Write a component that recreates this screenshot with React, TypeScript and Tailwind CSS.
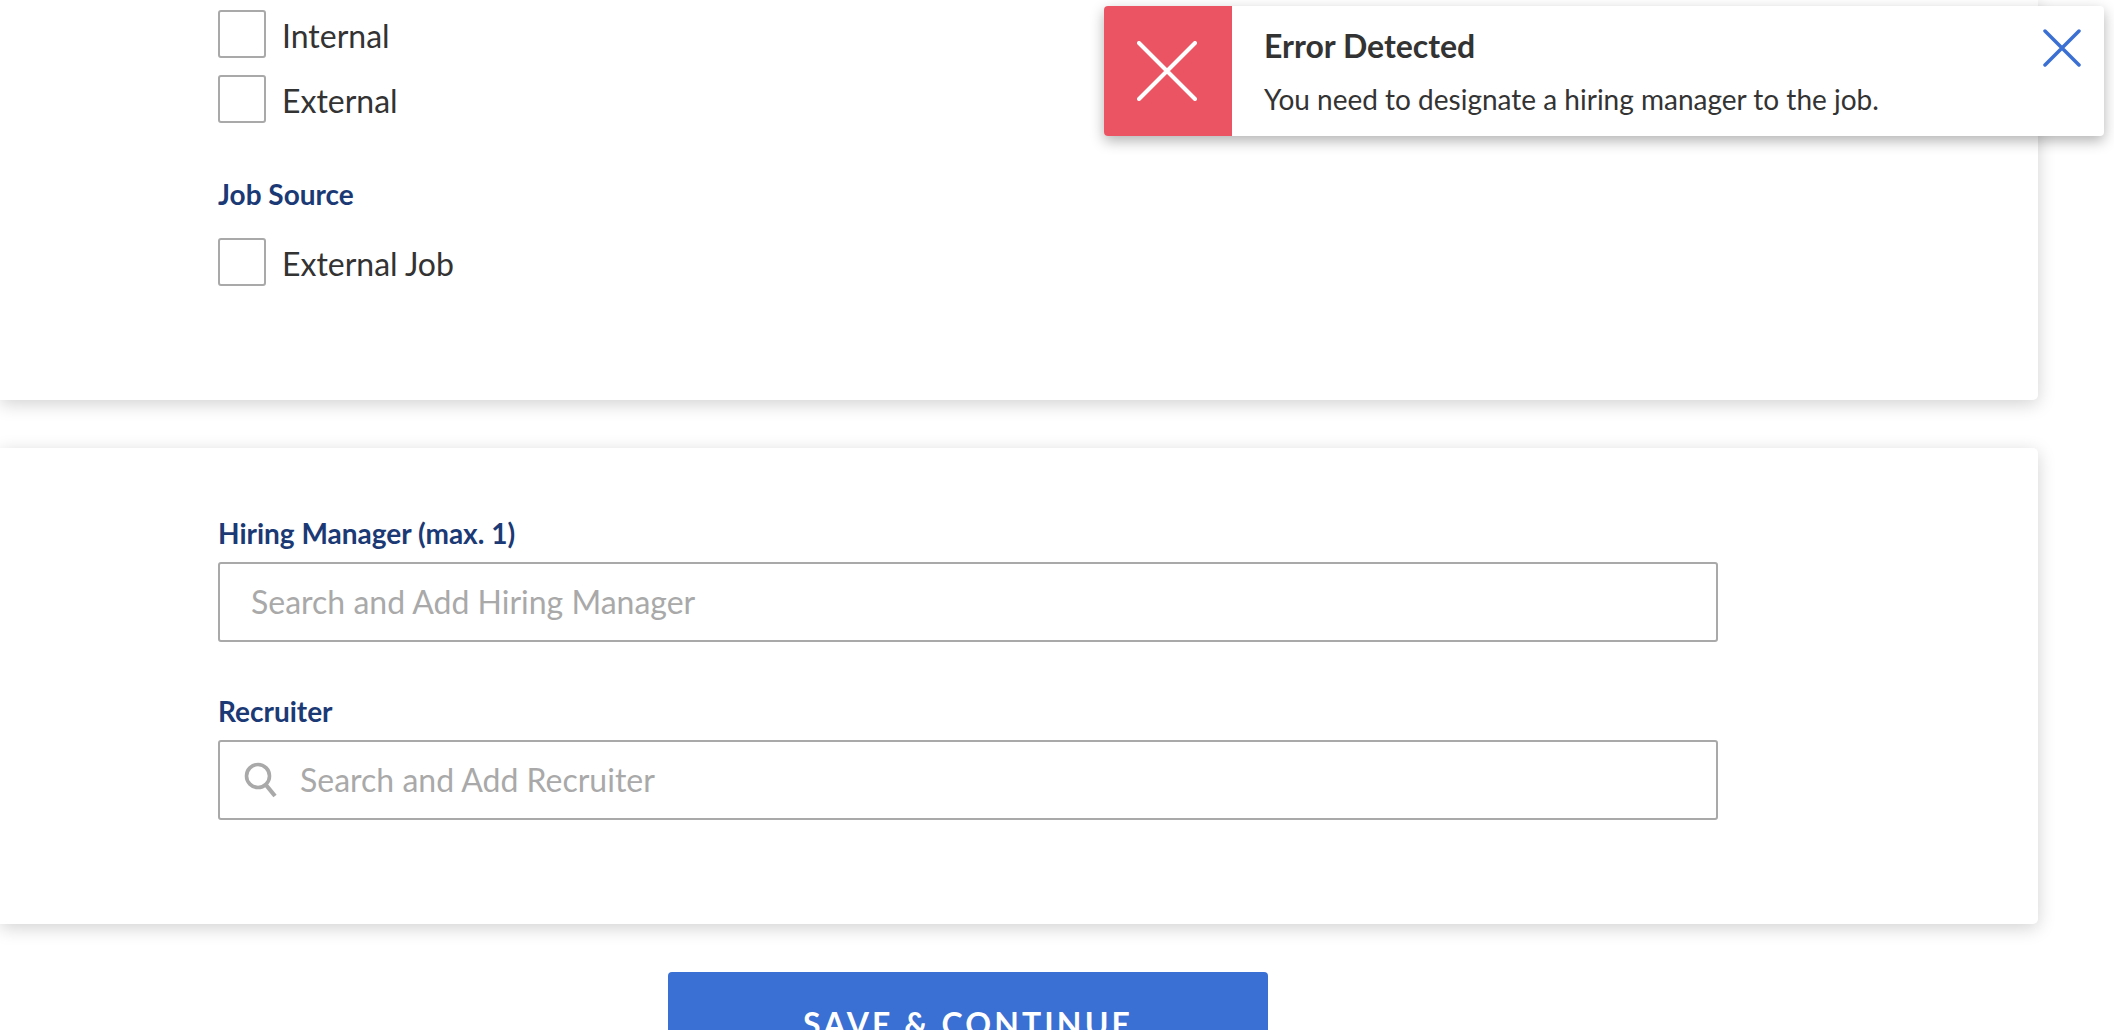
import React from "react";

function Check({ label, className = "" }: { label: string; className?: string }) {
  return (
    <label className={`flex items-center h-[48px] ${className}`}>
      <span className="w-[48px] h-[48px] rounded-[3px] border-2 border-[#a9a9a9] bg-white shrink-0" />
      <span className="ml-[16px] text-[32px] leading-[48px] text-[#333333] relative top-[2px]">{label}</span>
    </label>
  );
}

function Label({ children, className = "" }: { children: React.ReactNode; className?: string }) {
  return <div className={`text-[28px] leading-[34px] font-bold text-[#1b3a75] ${className}`}>{children}</div>;
}

export default function App() {
  return (
    <div className="relative w-[2114px] h-[1030px] overflow-hidden bg-white font-['Lato','Liberation_Sans',sans-serif]">
      <div className="w-[2038px] h-[400px] bg-white rounded-br-[5px] shadow-[0_4px_18px_rgba(0,0,0,0.18)] pl-[218px] pt-[10px]">
        <Check label="Internal" />
        <Check label="External" className="mt-[17px]" />
        <Label className="mt-[54px]">Job Source</Label>
        <Check label="External Job" className="mt-[27px]" />
      </div>

      <div className="mt-[48px] w-[2038px] h-[476px] bg-white rounded-r-[5px] shadow-[0_4px_18px_rgba(0,0,0,0.18)] pl-[218px] pt-[68px]">
        <Label>Hiring Manager (max. 1)</Label>
        <div className="mt-[12px] w-[1500px] h-[80px] rounded-[3px] border-2 border-[#a9a9a9] flex items-center pl-[31px] text-[32px] text-[#a9a9a9]">
          Search and Add Hiring Manager
        </div>
        <Label className="mt-[52px]">Recruiter</Label>
        <div className="mt-[12px] w-[1500px] h-[80px] rounded-[3px] border-2 border-[#a9a9a9] flex items-center pl-[24px] text-[32px] text-[#a9a9a9]">
          <svg width="34" height="38" viewBox="0 0 34 38" fill="none" stroke="#a9a9a9" className="shrink-0">
            <circle cx="14" cy="15" r="11.5" strokeWidth="3.6" />
            <path d="M22 24 L31 35" strokeWidth="4.2" />
          </svg>
          <span className="ml-[22px]">Search and Add Recruiter</span>
        </div>
      </div>

      <div className="mt-[48px] flex justify-center w-[1936px]">
        <button className="w-[600px] h-[58px] rounded-t-[4px] overflow-hidden bg-[#3a6fd3] text-white text-[32px] font-bold tracking-[3.1px] pt-[30px] leading-[44px]">
          SAVE &amp; CONTINUE
        </button>
      </div>

      <div className="absolute left-[1104px] top-[6px] w-[1000px] h-[130px] flex rounded-[4px] overflow-hidden bg-white shadow-[0_5px_14px_rgba(0,0,0,0.3)]">
        <div className="w-[128px] bg-[#eb5563] flex items-center justify-center shrink-0 pr-[2px]">
          <svg width="60" height="60" viewBox="0 0 60 60" stroke="#ffffff" strokeWidth="4" strokeLinecap="round">
            <path d="M2 2 L58 58 M58 2 L2 58" />
          </svg>
        </div>
        <div className="flex-1 pl-[32px] pt-[20px] text-[#333333]">
          <div className="text-[32px] leading-[40px] font-bold">Error Detected</div>
          <div className="mt-[15px] text-[28px] leading-[36px]">You need to designate a hiring manager to the job.</div>
        </div>
        <div className="pr-[23px] pt-[23px]">
          <svg width="38" height="38" viewBox="0 0 38 38" stroke="#3a6fd3" strokeWidth="3.5" strokeLinecap="round">
            <path d="M2 2 L36 36 M36 2 L2 36" />
          </svg>
        </div>
      </div>
    </div>
  );
}
